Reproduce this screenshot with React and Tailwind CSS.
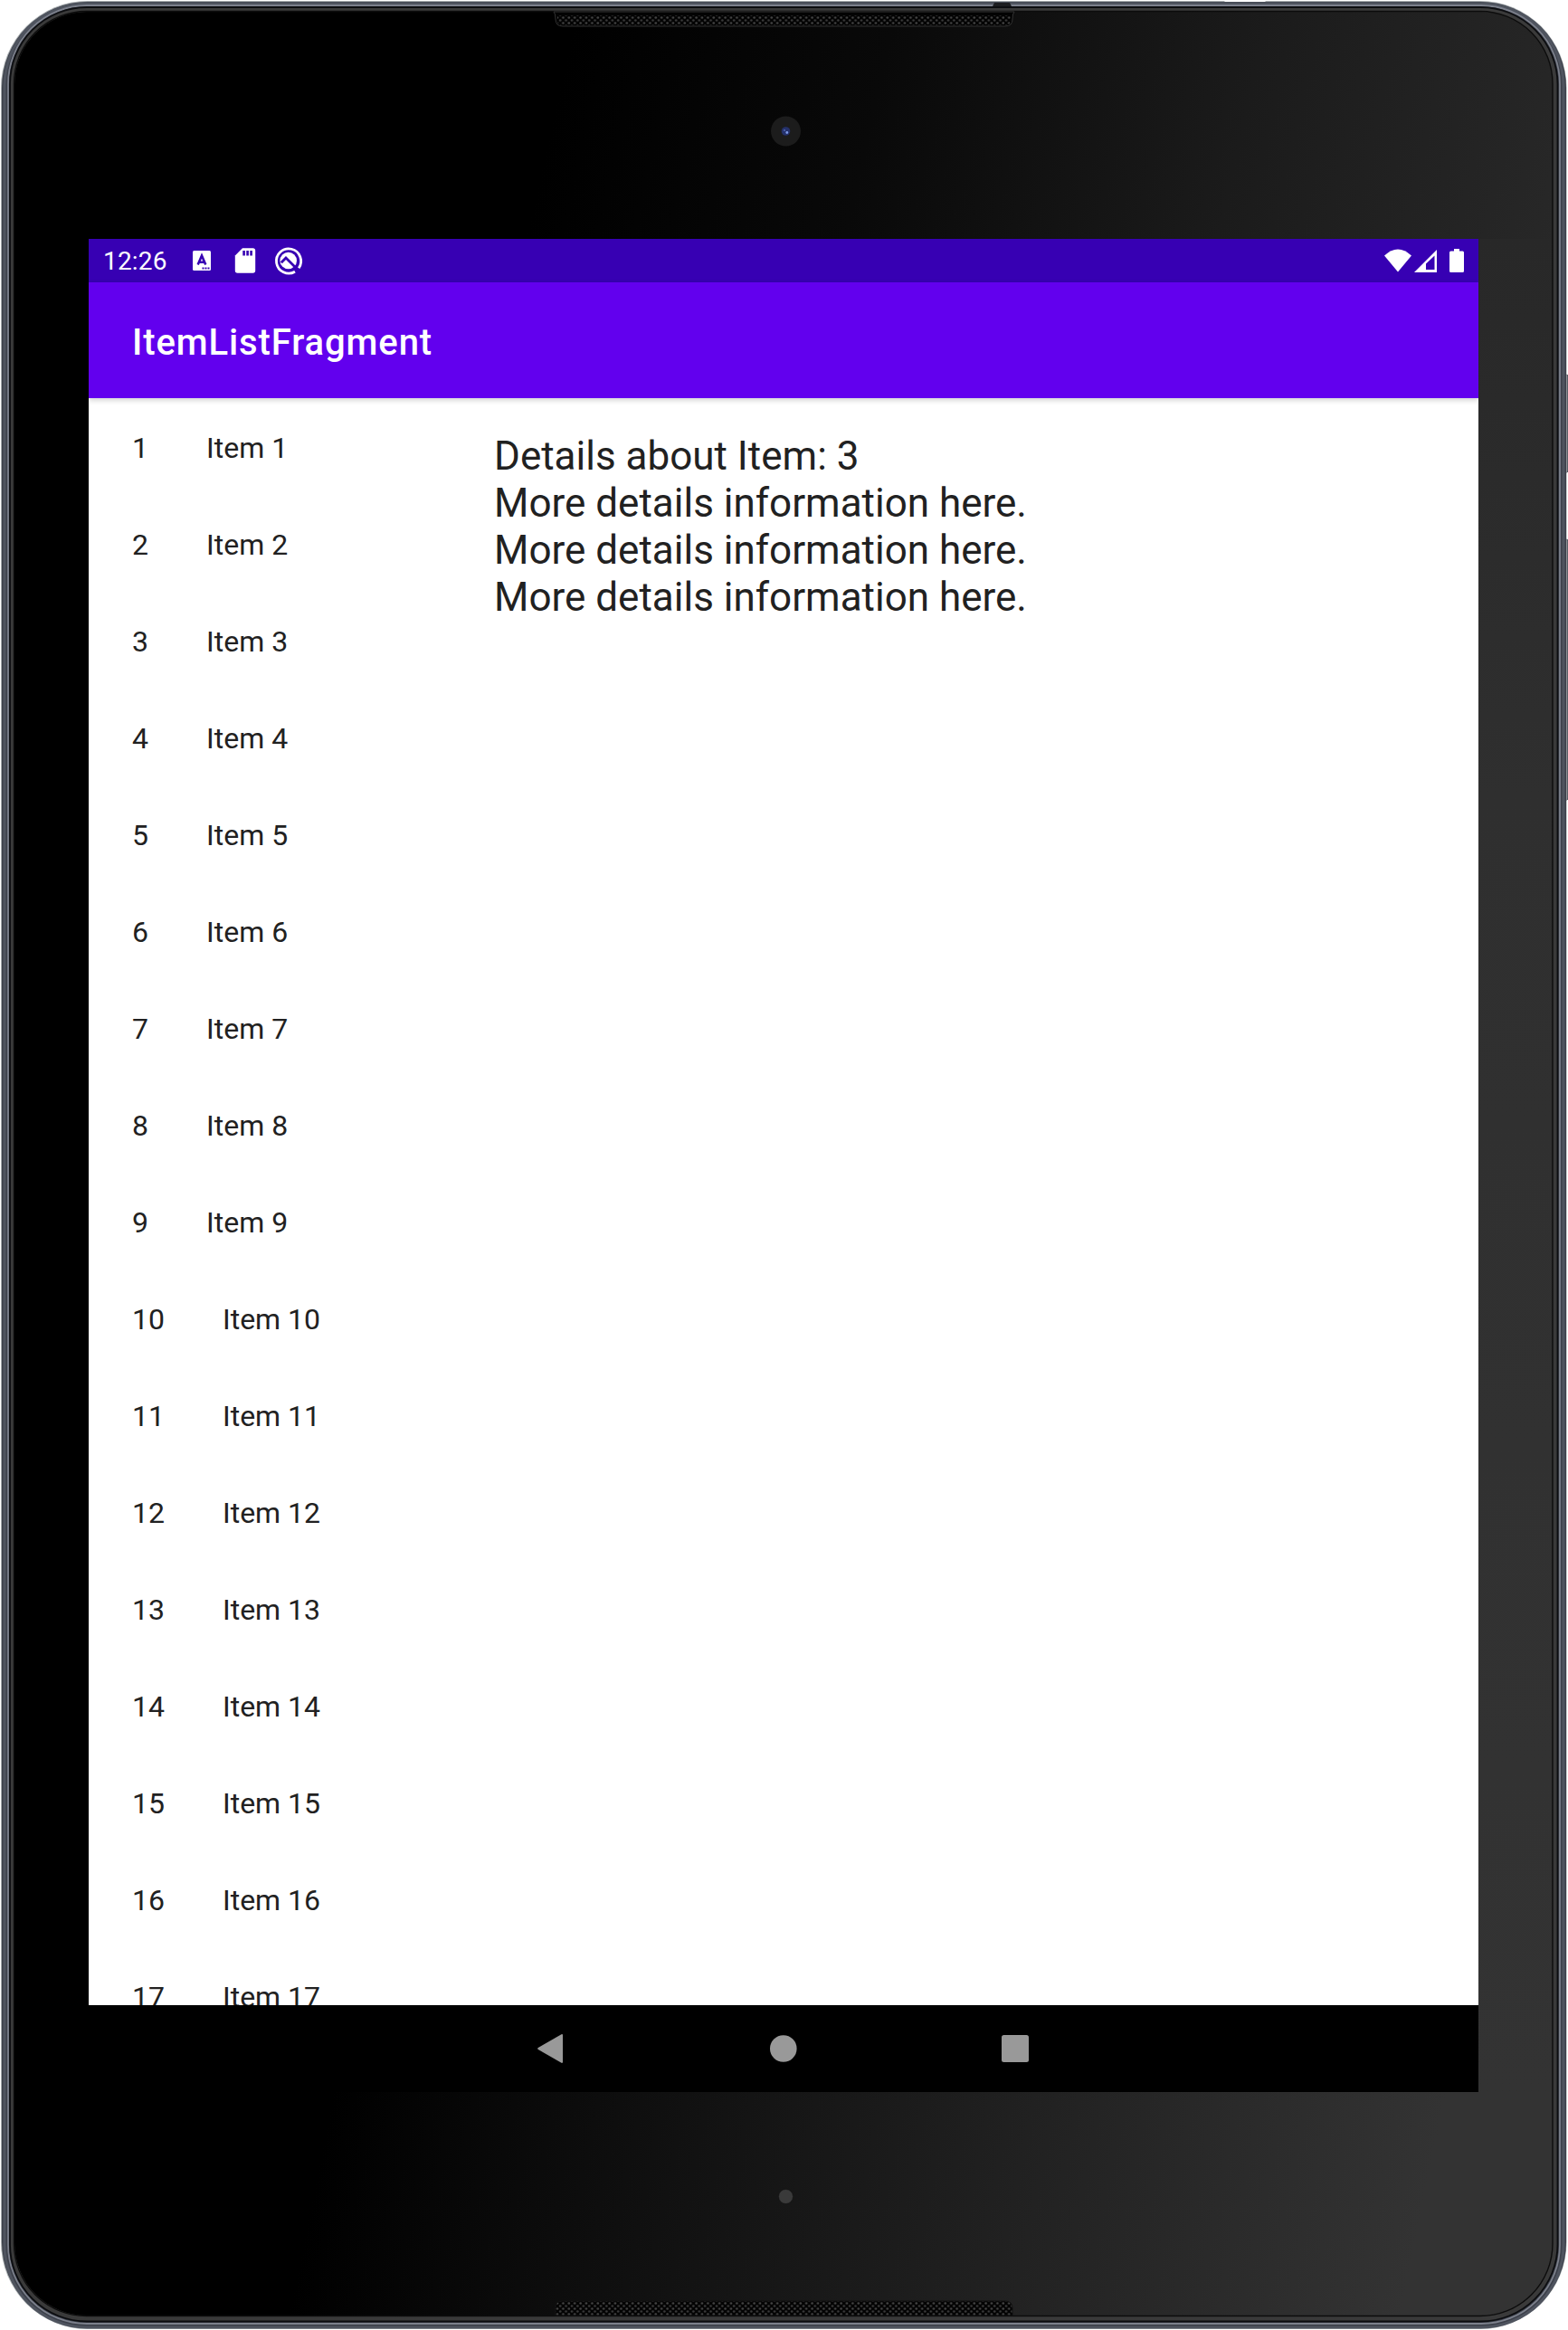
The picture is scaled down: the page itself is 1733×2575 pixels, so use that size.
const items = Array.from({ length: 17 }, (_, i) => i + 1);

function Bezel() {
  return (
    <svg className="absolute inset-0" width="1733" height="2575" viewBox="0 0 1733 2575" fill="none">
      <defs>
        <linearGradient id="glass" gradientUnits="userSpaceOnUse" x1="640" y1="0" x2="1760" y2="250">
          <stop offset="0" stopColor="#000" />
          <stop offset="0.3" stopColor="#090909" />
          <stop offset="0.65" stopColor="#1b1b1b" />
          <stop offset="1" stopColor="#292929" />
        </linearGradient>
        <linearGradient id="glassLow" gradientUnits="userSpaceOnUse" x1="380" y1="2260" x2="1560" y2="2500">
          <stop offset="0" stopColor="#000" />
          <stop offset="0.2" stopColor="#0b0b0b" />
          <stop offset="0.65" stopColor="#222" />
          <stop offset="1" stopColor="#333" />
        </linearGradient>
        <linearGradient id="glassSide" x1="0" y1="0" x2="0" y2="1">
          <stop offset="0" stopColor="#282828" />
          <stop offset="0.3" stopColor="#2f2f2f" />
          <stop offset="1" stopColor="#333" />
        </linearGradient>
        <pattern id="mesh" width="6.4" height="6" patternUnits="userSpaceOnUse">
          <rect width="6.4" height="6" fill="#030303" />
          <circle cx="1.6" cy="1.5" r="1.3" fill="#444" />
          <circle cx="4.8" cy="4.5" r="1.3" fill="#3a3a3a" />
        </pattern>
        <clipPath id="face"><rect x="16" y="13" width="1700" height="2546" rx="80" /></clipPath>
      </defs>
      <path d="M1727 412l6 3v106l-6 4zM1727 594l6 3v286l-6 4z" fill="#777a83" stroke="#3d4048" />
      <rect x="1" y="1" width="1730.500" height="2573" rx="96" fill="#a4a9ac" />
      <rect x="2" y="2" width="1729" height="2571" rx="95" fill="#3c404a" />
      <rect x="5" y="4" width="1723" height="2568" rx="91" stroke="#4f545f" strokeWidth="3" />
      <rect x="9" y="6" width="1715" height="2562" rx="87" stroke="#7c808c" strokeWidth="1.8" />
      <rect x="11" y="8" width="1710.500" height="2557.500" rx="85" fill="#3a3a3a" stroke="#0c0d10" strokeWidth="1.8" />
      <g clipPath="url(#face)">
        <rect x="16" y="13" width="1700" height="260" fill="url(#glass)" />
        <rect x="16" y="264" width="90" height="2050" fill="#000" />
        <rect x="1620" y="264" width="96" height="2050" fill="url(#glassSide)" />
        <rect x="16" y="2312" width="1700" height="247" fill="url(#glassLow)" />
      </g>
      <rect x="15.5" y="12.5" width="1700.5" height="2547" rx="80" stroke="#0c0c0c" strokeWidth="1.400" />
      <path d="M1097 7l2-4h17l2 4z" fill="#1c1d20" />
      <path d="M1352 0h48l-2 2h-44z" fill="#fff" />
      <path d="M612 13q2 2 2 8q0 8 8 8H1111q8 0 8-8q0-6 2-8z" fill="#030303" stroke="#333" />
      <path d="M616 17H1117V22q0 6-6 6H622q-6 0-6-6z" fill="url(#mesh)" />
      <path d="M613.500 2559V2551q0-8 8-8H1111q8 0 8 8V2559z" fill="url(#mesh)" stroke="#111" />
      <circle cx="868.5" cy="145" r="16.500" fill="#1c1c1c" />
      <circle cx="868.5" cy="145" r="4.800" fill="#25316b" />
      <circle cx="869.800" cy="146.500" r="1.400" fill="#7d9be8" />
      <circle cx="867" cy="144" r="1" fill="#5068b4" />
      <circle cx="868.5" cy="2427.500" r="8" fill="#3a3a3a" stroke="#111" strokeWidth="0.6" />
    </svg>
  );
}

function StatusBar() {
  return (
    <div className="flex h-12 shrink-0 items-center bg-[#3700b3] pl-4 text-[28px] leading-[48px] text-white">
      <span className="w-[94px] pt-0.5 leading-[46px] tracking-[0.2px]">12:26</span>
      <svg width="130" height="48" viewBox="208 264 130 48" fill="none">
        <rect x="213" y="277" width="20" height="22" rx="1.500" fill="#fff" />
        <path d="M218.700 292.500L223 282.500L227.300 292.500M220.300 289.700H225.700" stroke="#3700b3" strokeWidth="2.600" />
        <path d="M223.500 296.500h2m1 0h2m1 0h2" stroke="#3700b3" strokeWidth="2" />
        <path d="M268 274.300h11.500a2.700 2.700 0 0 1 2.700 2.700v22a2.700 2.700 0 0 1-2.700 2.700h-17a2.700 2.700 0 0 1-2.700-2.700V282.500z" fill="#fff" />
        <path d="M269.600 277v5.500M273.600 277v5.500M277.600 277v5.500" stroke="#3700b3" strokeWidth="2.600" />
        <path d="M326 300.200A13.600 13.600 0 1 1 330.200 296.300" stroke="#fff" strokeWidth="2.800" />
        <circle cx="318.700" cy="288" r="9.300" fill="#fff" />
        <path d="M310.800 290.300L316 285L331 300" stroke="#3700b3" strokeWidth="2.800" />
      </svg>
      <svg className="ml-auto" width="116" height="48" viewBox="1518 264 116 48" fill="none">
        <path d="M1530 282.500Q1545 268.500 1560 282.500L1545 300.500z" fill="#fff" />
        <path d="M1588 276V301H1563z" fill="#fff" />
        <path d="M1585.500 282.500V298H1576V291.500z" fill="#3700b3" />
        <path d="M1607 275h6v2.500h3.500a1.500 1.500 0 0 1 1.500 1.500v20.500a1.500 1.500 0 0 1-1.500 1.500h-13a1.500 1.500 0 0 1-1.500-1.500V279a1.500 1.500 0 0 1 1.500-1.500h3.500z" fill="#fff" />
      </svg>
    </div>
  );
}

function NavBar() {
  return (
    <div className="flex h-24 shrink-0 items-center bg-black">
      <svg width="1536" height="96" viewBox="98 2216 1536 96" fill="#999">
        <path d="M620.500 2248.200L594.800 2262.900q-1.600 1.100 0 2.200L620.500 2279.800q1.500 .6 1.500-1.200V2249.400q0-1.800-1.500-1.200z" />
        <circle cx="865.8" cy="2264" r="14.800" />
        <rect x="1107" y="2249" width="30" height="30" rx="2.500" />
      </svg>
    </div>
  );
}

export default function App() {
  return (
    <div className="relative h-[2575px] w-[1733px] overflow-hidden bg-white pl-[98px] pt-[264px] font-[Roboto,sans-serif]">
      <Bezel />
      <div className="relative flex h-[2048px] w-[1536px] flex-col overflow-hidden bg-white text-[#212121]">
        <StatusBar />
        <header className="relative z-10 flex h-32 shrink-0 items-center bg-[#6200ee] px-12 shadow-[0_2px_6px_rgba(0,0,0,0.2)]">
          <h1 className="pt-1.5 text-[40px] font-medium leading-[48px] tracking-[0.9px] text-white">ItemListFragment</h1>
        </header>
        <main className="flex min-h-0 flex-1 overflow-hidden">
          <ul className="w-[400px] shrink-0 pl-12">
            {items.map((n) => (
              <li key={n} className="flex h-[107px] items-center gap-16 pt-1 text-[32px] leading-[43px]">
                <span>{n}</span>
                <span>Item {n}</span>
              </li>
            ))}
          </ul>
          <div className="pl-12 pt-[38px] text-[44px] leading-[52px]">
            <p>Details about Item: 3</p>
            <p>More details information here.</p>
            <p>More details information here.</p>
            <p>More details information here.</p>
          </div>
        </main>
        <NavBar />
      </div>
    </div>
  );
}
